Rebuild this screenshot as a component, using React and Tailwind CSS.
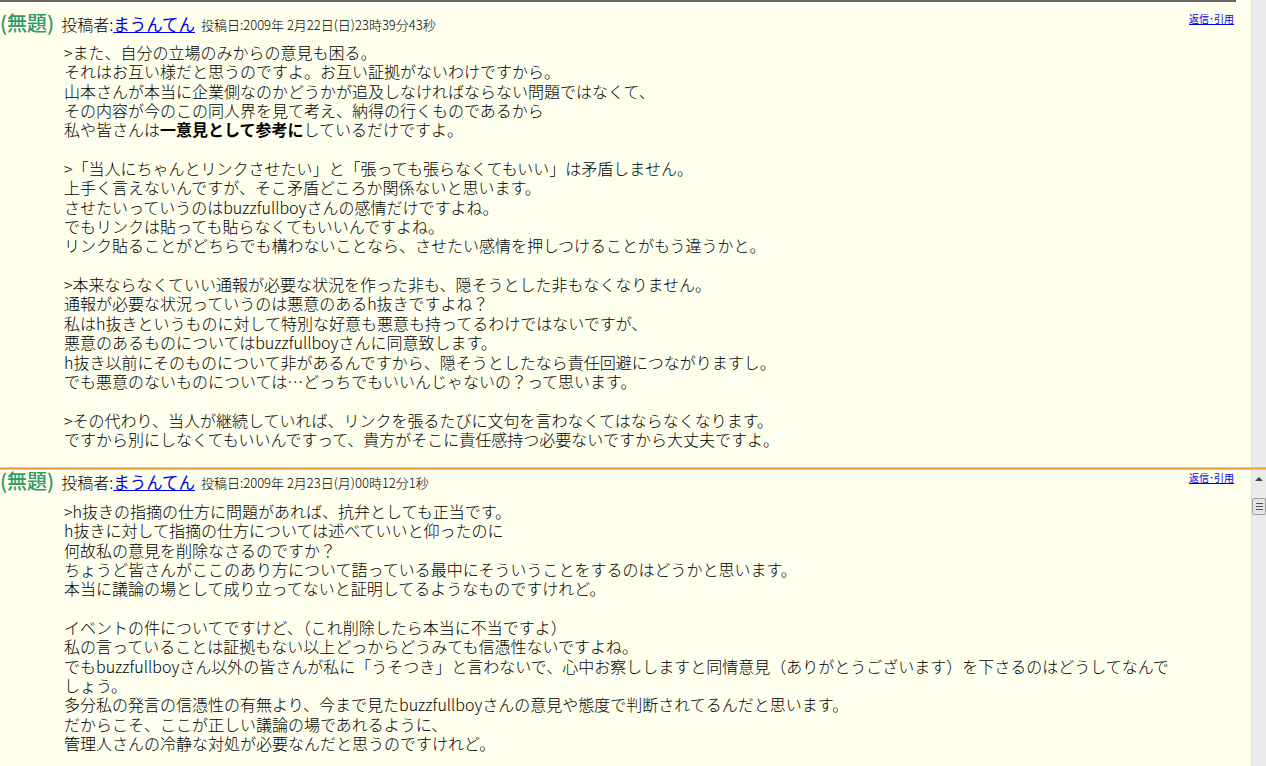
import React from 'react';

const post1 = [
    '>また、自分の立場のみからの意見も困る。',
    'それはお互い様だと思うのですよ。お互い証拠がないわけですから。',
    '山本さんが本当に企業側なのかどうかが追及しなければならない問題ではなくて、',
    'その内容が今のこの同人界を見て考え、納得の行くものであるから',
    'BOLD',
    '',
    '>「当人にちゃんとリンクさせたい」と「張っても張らなくてもいい」は矛盾しません。',
    '上手く言えないんですが、そこ矛盾どころか関係ないと思います。',
    'させたいっていうのはbuzzfullboyさんの感情だけですよね。',
    'でもリンクは貼っても貼らなくてもいいんですよね。',
    'リンク貼ることがどちらでも構わないことなら、させたい感情を押しつけることがもう違うかと。',
    '',
    '>本来ならなくていい通報が必要な状況を作った非も、隠そうとした非もなくなりません。',
    '通報が必要な状況っていうのは悪意のあるh抜きですよね？',
    '私はh抜きというものに対して特別な好意も悪意も持ってるわけではないですが、',
    '悪意のあるものについてはbuzzfullboyさんに同意致します。',
    'h抜き以前にそのものについて非があるんですから、隠そうとしたなら責任回避につながりますし。',
    'でも悪意のないものについては…どっちでもいいんじゃないの？って思います。',
    '',
    '>その代わり、当人が継続していれば、リンクを張るたびに文句を言わなくてはならなくなります。',
    'ですから別にしなくてもいいんですって、貴方がそこに責任感持つ必要ないですから大丈夫ですよ。',
];

const post2 = [
    '>h抜きの指摘の仕方に問題があれば、抗弁としても正当です。',
    'h抜きに対して指摘の仕方については述べていいと仰ったのに',
    '何故私の意見を削除なさるのですか？',
    'ちょうど皆さんがここのあり方について語っている最中にそういうことをするのはどうかと思います。',
    '本当に議論の場として成り立ってないと証明してるようなものですけれど。',
    '',
    'イベントの件についてですけど、（これ削除したら本当に不当ですよ）',
    '私の言っていることは証拠もない以上どっからどうみても信憑性ないですよね。',
    'でもbuzzfullboyさん以外の皆さんが私に「うそつき」と言わないで、心中お察ししますと同情意見（ありがとうございます）を下さるのはどうしてなんで',
    'しょう。',
    '多分私の発言の信憑性の有無より、今まで見たbuzzfullboyさんの意見や態度で判断されてるんだと思います。',
    'だからこそ、ここが正しい議論の場であれるように、',
    '管理人さんの冷静な対処が必要なんだと思うのですけれど。',
];

const font = { fontFamily: '"Noto Sans CJK JP", "DejaVu Sans", sans-serif' };

function Header({ date, linkTop }) {
    return (
        <div className="flex items-start h-[28px] pr-[17px]">
            <div className="flex items-end h-full">
                <span className="text-[20px] font-medium text-[#339966] leading-[26px]">(無題)</span>
                <span className="ml-[7px] text-[16px] text-black font-light leading-[24px]">投稿者:</span>
                <a className="text-[16.5px] text-[#0000ee] underline leading-[24px]">まうんてん</a>
                <span className="ml-[6px] text-[13px] text-black font-light leading-[22px]">投稿日:{date}</span>
            </div>
            <a className={`ml-auto text-[10px] leading-[14px] text-[#0000ee] underline ${linkTop}`}>返信･引用</a>
        </div>
    );
}

function Body({ lines }) {
    return (
        <div className="pl-[64px] text-[16px] font-light leading-[19.35px] text-black whitespace-nowrap">
            {lines.map((l, i) =>
                l === 'BOLD' ? (
                    <div key={i}>私や皆さんは<b className="font-bold">一意見として参考に</b>しているだけですよ。</div>
                ) : (
                    <div key={i} className="h-[19.35px]">{l}</div>
                )
            )}
        </div>
    );
}

export default function App() {
    return (
        <div className="w-[1266px] h-[766px] overflow-hidden bg-[#ffffee] flex flex-col" style={font}>
            {/* first post */}
            <div className="flex h-[467px]">
                <div className="flex-1">
                    <div className="w-[1236px] h-[2px] bg-[#666666]" />
                    <div className="pt-[6px]">
                        <Header date="2009年 2月22日(日)23時39分43秒" linkTop="mt-[4px]" />
                    </div>
                    <div className="mt-[7px]">
                        <Body lines={post1} />
                    </div>
                </div>
                <div className="w-[15px] bg-[#ebebeb] border-l border-[#dde3ea]" />
            </div>

            <div className="h-[3px] bg-[#f0a040] border-y border-[#f7c070]" />

            {/* second post */}
            <div className="flex flex-1">
                <div className="flex-1">
                    <div className="-mt-[4px]">
                        <Header date="2009年 2月23日(月)00時12分1秒" linkTop="mt-[5px]" />
                    </div>
                    <div className="mt-[8px]">
                        <Body lines={post2} />
                    </div>
                </div>
                <div className="w-[15px] bg-[#ebebeb] border-l border-[#dde3ea] flex flex-col items-center">
                    <div className="mt-[7px] w-0 h-0 border-x-[4px] border-x-transparent border-b-[4px] border-b-[#444444]" />
                    <div className="mt-[17px] w-[14px] h-[17px] bg-[#e4e4e4] border border-[#a0a0a0] rounded-[2px] flex flex-col items-center justify-center gap-[2px]">
                        <div className="w-[7px] h-[1px] bg-[#555555]" />
                        <div className="w-[7px] h-[1px] bg-[#555555]" />
                        <div className="w-[7px] h-[1px] bg-[#555555]" />
                    </div>
                </div>
            </div>
        </div>
    );
}
